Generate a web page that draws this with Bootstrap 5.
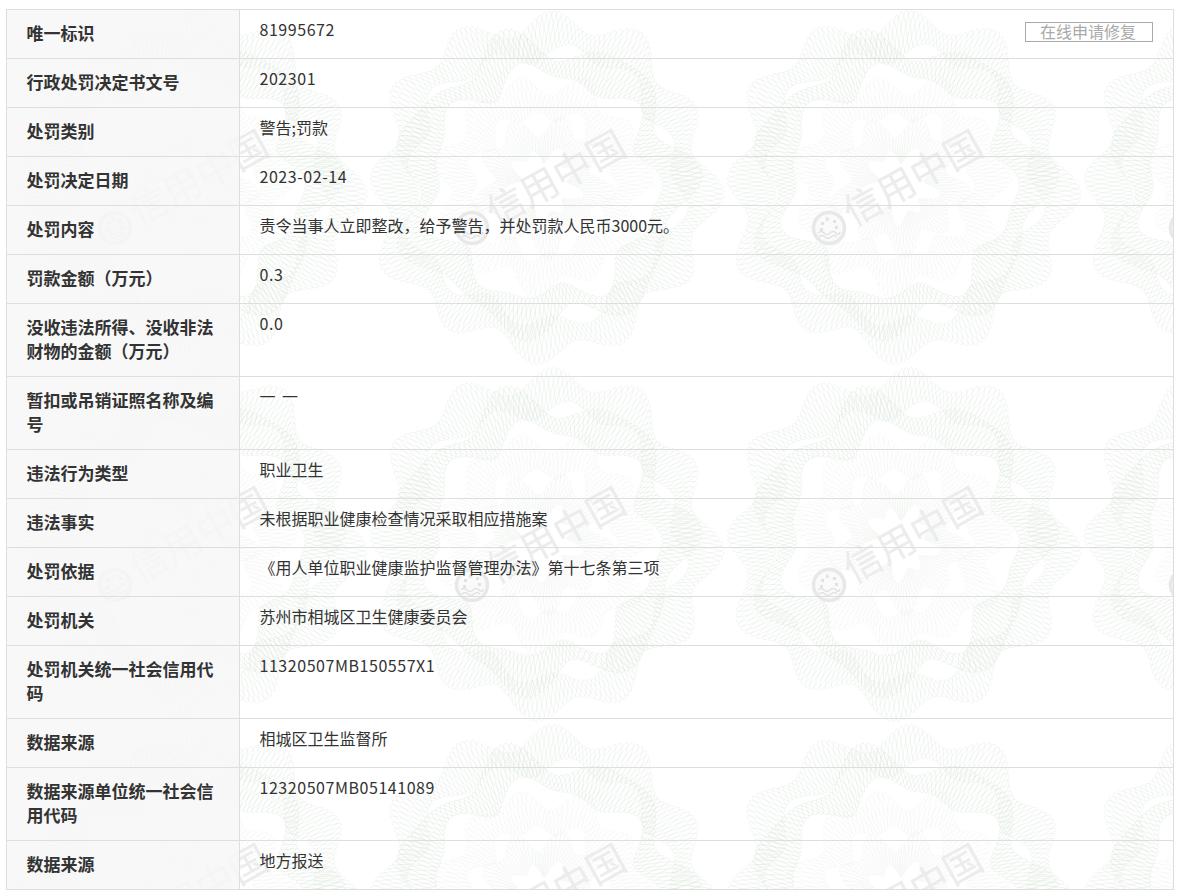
<!DOCTYPE html>
<html lang="zh-CN">
<head>
<meta charset="utf-8">
<title>行政处罚详情</title>
<link rel="stylesheet" href="https://cdn.jsdelivr.net/npm/bootstrap@5.3.0/dist/css/bootstrap.min.css">
<style>
body{background:#fff;font-family:"Noto Sans CJK SC","Noto Sans",sans-serif;color:#333}
.sheet{width:1168px;margin:9px 0 0 6px}
.wm-layer{top:0;left:0;width:100%;height:100%;z-index:0;pointer-events:none}
.wm-text{font-family:"Noto Sans CJK SC",sans-serif;font-size:38px;font-weight:400;fill:#ececec}
.info-table{position:relative;z-index:1;table-layout:fixed;width:100%;margin:0;--bs-table-bg:transparent;--bs-table-color:#333;--bs-table-border-color:#dedede;border-color:#dedede}
.info-table th,.info-table td{vertical-align:top;line-height:24px;box-shadow:none}
.info-table th{width:233px;padding:11px 19.500px 13px;font-size:17px;font-weight:700;background:rgba(246,246,246,.82);color:#333}
.info-table td{padding:7px 19.500px 13px;font-size:16px;font-weight:400;background:transparent}
.num{letter-spacing:.55px}
.gap-word{word-spacing:3px}
.repair-btn{width:128px;height:20px;margin:5px .5px 0 0;border:1px solid #aaa;border-radius:0;background:transparent;color:#aaa;font-size:16px;line-height:15px;padding:0 2px 2px 0;text-align:center}
</style>
</head>
<body>
<div class="sheet position-relative">
<svg class="wm-layer position-absolute" xmlns="http://www.w3.org/2000/svg" aria-hidden="true">
<defs>
<g id="rose">
<g id="gl" fill="none" stroke="#dae6da" stroke-width=".45"></g>
<text class="wm-text" transform="translate(-47,42) rotate(-29)">信用中国</text>
<g transform="translate(-71,43)">
<circle r="15.500" fill="#fafafa" stroke="#e8e8e8" stroke-width="3.500"/>
<path d="M-3-11l1.500 1 1.500-1-.5 2 1.500 1.200h-2l-.5 1.800-.8-1.800h-2l1.500-1.200zM-8-6h3v3h-3zM4-8h3v3h-3zM6-2h3v3h-3zM-9 0h3v3h-3z" fill="#e2e2e2"/>
<path d="M-11 5q3-3 6 0t6 0 6 0 4-1M-10 9q3-3 6 0t6 0 6 0" fill="none" stroke="#e2e2e2" stroke-width="1.600"/>
</g>
</g>
</defs>
<g id="tiles"></g>
</svg>
<table class="table table-bordered info-table">
<tbody>
<tr><th>唯一标识</th><td><div class="d-flex justify-content-between align-items-start"><span class="num">81995672</span><button type="button" class="btn repair-btn">在线申请修复</button></div></td></tr>
<tr><th>行政处罚决定书文号</th><td><span class="num">202301</span></td></tr>
<tr><th>处罚类别</th><td>警告;罚款</td></tr>
<tr><th>处罚决定日期</th><td><span class="num">2023-02-14</span></td></tr>
<tr><th>处罚内容</th><td>责令当事人立即整改，给予警告，并处罚款人民币3000元。</td></tr>
<tr><th>罚款金额（万元）</th><td><span class="num">0.3</span></td></tr>
<tr><th>没收违法所得、没收非法财物的金额（万元）</th><td><span class="num">0.0</span></td></tr>
<tr><th>暂扣或吊销证照名称及编号</th><td><span class="gap-word">一 一</span></td></tr>
<tr><th>违法行为类型</th><td>职业卫生</td></tr>
<tr><th>违法事实</th><td>未根据职业健康检查情况采取相应措施案</td></tr>
<tr><th>处罚依据</th><td>《用人单位职业健康监护监督管理办法》第十七条第三项</td></tr>
<tr><th>处罚机关</th><td>苏州市相城区卫生健康委员会</td></tr>
<tr><th>处罚机关统一社会信用代码</th><td><span class="num">11320507MB150557X1</span></td></tr>
<tr><th>数据来源</th><td>相城区卫生监督所</td></tr>
<tr><th>数据来源单位统一社会信用代码</th><td><span class="num">12320507MB05141089</span></td></tr>
<tr><th>数据来源</th><td>地方报送</td></tr>
</tbody>
</table>
</div>
<script>
(function(){
  var NS='http://www.w3.org/2000/svg',g=document.getElementById('gl');
  function band(R0,A,k,k2,W,WA,m,n,ph,op){
    for(var i=0;i<n;i++){
      var d='',a=2*Math.PI*i/n;
      for(var s=0;s<=1000;s++){
        var t=s/1000*2*Math.PI;
        var R=R0+A*Math.sin(k*t+ph)+A*.7*Math.sin(k2*t+ph*2);
        var w=W+WA*Math.sin(k*t+ph+1.2);
        var r=R+w*Math.sin(m*t+a);
        d+=(s?'L':'M')+(r*Math.cos(t)).toFixed(1)+' '+(r*Math.sin(t)).toFixed(1);
      }
      var p=document.createElementNS(NS,'path');
      p.setAttribute('d',d+'Z');
      p.setAttribute('opacity',op);
      g.appendChild(p);
    }
  }
  band(150,7,12,5,16,7,44,5,.4,.8);
  band(126,9,7,11,15,7,36,5,1.3,.95);
  band(86,6,11,7,16,5,34,4,1.6,.45);
  band(46,6,9,5,15,5,26,4,.2,.5);
  var host=document.getElementById('tiles');
  [-171,186,543,900,1257].forEach(function(x){
    [-172,185,542,899].forEach(function(y){
      var u=document.createElementNS(NS,'use');
      u.setAttribute('href','#rose');
      u.setAttribute('x',x-6);
      u.setAttribute('y',y-9);
      host.appendChild(u);
    });
  });
})();
</script>
<script src="https://cdn.jsdelivr.net/npm/bootstrap@5.3.0/dist/js/bootstrap.bundle.min.js"></script>
</body>
</html>
